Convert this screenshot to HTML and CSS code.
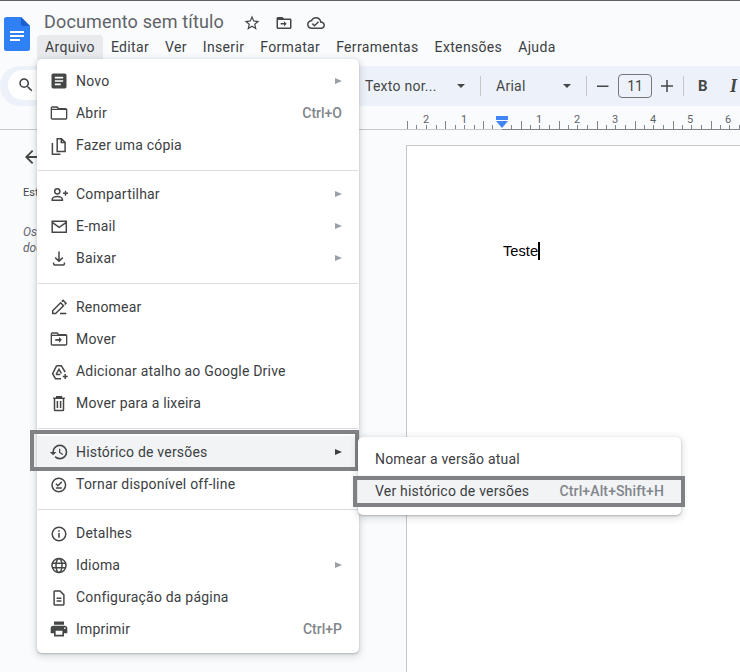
FILE: index.html
```html
<!DOCTYPE html>
<html lang="pt-BR">
<head>
<meta charset="utf-8">
<title>Documento sem título</title>
<link rel="stylesheet" href="styles.css">
</head>
<body>
<div class="app">
  <header class="header">
    <svg class="logo" width="26" height="34" viewBox="0 0 26 34"><path fill="#2f80f5" d="M2.5 0H17l9 9v22.5a2.5 2.5 0 0 1-2.5 2.5h-21A2.5 2.5 0 0 1 0 31.500v-29A2.500 2.500 0 0 1 2.500 0z"/><path fill="#1a5fd0" d="M17 0l9 9h-7a2 2 0 0 1-2-2z"/><path fill="#fff" d="M6 14h14v2H6zM6 18h14v2H6zM6 22h10v2H6z"/></svg>
    <div class="head-main">
      <div class="title-row">
        <span class="title">Documento sem título</span>
        <svg class="head-ico star" width="18" height="18" viewBox="0 0 24 24"><path d="M22 9.240l-7.190-.62L12 2 9.190 8.630 2 9.240l5.460 4.730L5.820 21 12 17.270 18.180 21l-1.630-7.030L22 9.240zM12 15.400l-3.760 2.270 1-4.280-3.320-2.880 4.380-.38L12 6.100l1.710 4.040 4.380.38-3.320 2.880 1 4.280L12 15.400z"/></svg>
        <svg class="head-ico" width="18" height="18" viewBox="0 0 24 24"><path d="M20 6h-8l-2-2H4c-1.100 0-1.990.9-1.990 2L2 18c0 1.100.9 2 2 2h16c1.100 0 2-.9 2-2V8c0-1.100-.9-2-2-2zm0 12H4V8h16v10zM12 16.500l3.500-3.500L12 9.500V12H7.500v2H12z"/></svg>
        <svg class="head-ico" width="18" height="18" viewBox="0 0 24 24"><path d="M19.350 10.040C18.670 6.590 15.640 4 12 4 9.110 4 6.600 5.640 5.350 8.040 2.340 8.360 0 10.910 0 14c0 3.310 2.690 6 6 6h13c2.760 0 5-2.240 5-5 0-2.640-2.050-4.780-4.650-4.960zM19 18H6c-2.210 0-4-1.790-4-4 0-2.050 1.530-3.760 3.560-3.970l1.070-.11.5-.95C8.080 7.140 9.940 6 12 6c2.620 0 4.880 1.860 5.390 4.430l.3 1.500 1.530.11c1.560.1 2.780 1.410 2.780 2.960 0 1.650-1.350 3-3 3zm-9-3.820l-2.090-2.090L6.500 13.500 10 17l6.010-6.010-1.410-1.410z"/></svg>
      </div>
      <nav class="menubar">
        <span class="mb-item mb-open">Arquivo</span>
        <span class="mb-item">Editar</span>
        <span class="mb-item">Ver</span>
        <span class="mb-item">Inserir</span>
        <span class="mb-item">Formatar</span>
        <span class="mb-item">Ferramentas</span>
        <span class="mb-item">Extensões</span>
        <span class="mb-item">Ajuda</span>
      </nav>
    </div>
  </header>

  <div class="toolbar">
    <div class="search">
      <svg width="18" height="18" viewBox="0 0 24 24" fill="#3c4043"><path d="M15.500 14h-.79l-.28-.27A6.470 6.470 0 0 0 16 9.500 6.500 6.500 0 1 0 9.500 16c1.610 0 3.090-.59 4.230-1.570l.27.28v.79l5 4.990L20.490 19l-4.990-5zm-6 0C7.010 14 5 11.990 5 9.500S7.010 5 9.500 5 14 7.010 14 9.500 11.990 14 9.500 14z"/></svg>
    </div>
    <div class="select sel-style"><span>Texto nor...</span><i class="caret"></i></div>
    <i class="sep"></i>
    <div class="select sel-font"><span>Arial</span><i class="caret"></i></div>
    <i class="sep sep-n"></i>
    <svg class="tb-sym tb-minus" width="12" height="12" viewBox="0 0 12 12"><path d="M0 5.500h11.500v1.500H0z"/></svg>
    <span class="size">11</span>
    <svg class="tb-sym tb-plus" width="12" height="12" viewBox="0 0 12 12"><path d="M5.250 0h1.500v5.250H12v1.500H6.750V12h-1.500V6.750H0v-1.500h5.250z"/></svg>
    <i class="sep sep-b"></i>
    <b class="tb-b">B</b>
    <i class="tb-i">I</i>
  </div>

  <div class="ruler">
    <svg width="740" height="24" viewBox="0 106 740 24">
      <path class="r-ticks" d="M407.500 121v8M416.500 125v4M426.500 125v4M436.500 125v4M445.500 121v8M455.500 125v4M464.500 125v4M474.500 125v4M483.500 121v8M492.500 125v4M511.500 125v4M521.500 121v8M530.500 125v4M539.500 125v4M549.500 125v4M559.500 121v8M568.500 125v4M577.500 125v4M587.500 125v4M597.500 121v8M606.500 125v4M615.500 125v4M625.500 125v4M635.500 121v8M644.500 125v4M653.500 125v4M663.500 125v4M673.500 121v8M682.500 125v4M691.500 125v4M701.500 125v4M711.500 121v8M720.500 125v4M729.500 125v4M739.500 125v4"/>
      <path class="r-line-l" d="M0 129.500h502"/>
      <path class="r-line-r" d="M502 129.500h238"/>
      <g class="r-nums">
        <text x="426" y="123">2</text><text x="464" y="123">1</text><text x="539" y="123">1</text><text x="577" y="123">2</text><text x="615" y="123">3</text><text x="653" y="123">4</text><text x="690" y="123">5</text><text x="728" y="123">6</text>
      </g>
      <path class="r-mark" d="M496 116h12v4h-12zM496 121h12l-6 7z"/>
    </svg>
  </div>

  <main class="workspace">
    <aside class="outline">
      <svg class="back" width="18" height="18" viewBox="0 0 18 18"><path d="M16 8H5.600l4.700-4.700L9 2 2 9l7 7 1.300-1.300L5.600 10H16z"/></svg>
      <p class="out-head">Estrutura do documento</p>
      <p class="out-note">Os títulos que você adicionar ao documento aparecerão aqui.</p>
    </aside>
    <section class="page"><p class="doc-text">Teste<span class="cursor"></span></p></section>
  </main>

  <div class="menu file-menu">
    <div class="row"><svg class="ico" viewBox="0 0 24 24"><path class="f" d="M19 3H5c-1.100 0-2 .9-2 2v14c0 1.100.9 2 2 2h14c1.100 0 2-.9 2-2V5c0-1.100-.9-2-2-2zm-5 14H7v-2h7v2zm3-4H7v-2h10v2zm0-4H7V7h10v2z"/></svg><span class="lbl">Novo</span><i class="arrow"></i></div>
    <div class="row"><svg class="ico" viewBox="0 0 24 24"><path class="f" d="M20 6h-8l-2-2H4c-1.100 0-1.990.9-1.990 2L2 18c0 1.100.9 2 2 2h16c1.100 0 2-.9 2-2V8c0-1.100-.9-2-2-2zm.4 12.400H3.600V8.400h16.800zM3.600 5.600h5.800l1 1.200H3.600z"/></svg><span class="lbl">Abrir</span><span class="key">Ctrl+O</span></div>
    <div class="row"><svg class="ico" viewBox="0 0 20 20"><path class="s" d="M8.200 3.700h4.300l3.600 3.600v9.100H8.200zM12.300 3.700v3.800h3.800M3.400 8v11.200h8"/></svg><span class="lbl">Fazer uma cópia</span></div>
    <hr class="div">
    <div class="row"><svg class="ico" viewBox="0 0 20 20"><circle class="s" cx="8.300" cy="7.300" r="2.600"/><path class="s" d="M3.200 16.300v-1c0-1.900 3.100-2.800 5.100-2.800s5.100.9 5.100 2.800v1zM16.500 6.800v5M14 9.300h5"/></svg><span class="lbl">Compartilhar</span><i class="arrow"></i></div>
    <div class="row"><svg class="ico" viewBox="0 0 20 20"><path class="s" d="M3.200 5.200h14.100v11.100H3.200zM3.200 6.400l7 5 7.100-5"/></svg><span class="lbl">E-mail</span><i class="arrow"></i></div>
    <div class="row"><svg class="ico" viewBox="0 0 20 20"><path class="s" d="M10 3.500v9.300M6.200 9.600l3.800 3.700 3.800-3.700M4.600 14.400v1.400c0 .8.500 1.200 1.200 1.200h8.400c.7 0 1.200-.4 1.200-1.200v-1.400"/></svg><span class="lbl">Baixar</span><i class="arrow"></i></div>
    <hr class="div">
    <div class="row"><svg class="ico" viewBox="0 0 20 20"><path class="s" d="M3.700 16.600v-2.900l7.900-7.900 2.900 2.900-7.900 7.900zM12.800 4.600l1.300-1.300 2.900 2.900-1.300 1.300"/><path class="f" d="M11 15.700h6.300v1.600H11z"/></svg><span class="lbl">Renomear</span></div>
    <div class="row"><svg class="ico" viewBox="0 0 24 24"><path class="f" d="M20 6h-8l-2-2H4c-1.100 0-1.990.9-1.990 2L2 18c0 1.100.9 2 2 2h16c1.100 0 2-.9 2-2V8c0-1.100-.9-2-2-2zm.4 12.400H3.600V8.400h16.800zM3.600 5.600h5.800l1 1.200H3.600zM12 16.500l3.500-3.500L12 9.500V12H7.500v2H12z"/></svg><span class="lbl">Mover</span></div>
    <div class="row"><svg class="ico" viewBox="0 0 20 20"><path class="s" d="M7.700 4.700h4.600l3.800 6.300M12 17.700H6.500l-2.900-5 4.100-8M7 13.500l3-5.200 2.400 4.200M7 13.500h4.300"/><path class="s" d="M16.200 13v5M13.700 15.500h5"/></svg><span class="lbl">Adicionar atalho ao Google Drive</span></div>
    <div class="row"><svg class="ico" viewBox="0 0 20 20"><path class="s" d="M4.200 5.200h11.600M5.500 5.200v11.600c0 .5.300.8.800.8h7.400c.5 0 .8-.3.8-.8V5.200M7.700 5v-1.300h4.600V5M8.400 8v7M11.600 8v7"/></svg><span class="lbl">Mover para a lixeira</span></div>
    <hr class="div">
    <div class="row row-on frame-hist"><svg class="ico" viewBox="0 0 24 24"><path class="f" d="M13 3a9 9 0 0 0-9 9H1l3.890 3.890.07.14L9 12H6c0-3.870 3.130-7 7-7s7 3.130 7 7-3.130 7-7 7c-1.930 0-3.680-.79-4.940-2.060l-1.420 1.420A8.954 8.954 0 0 0 13 21a9 9 0 0 0 0-18zm-1 5v5l4.280 2.540.72-1.210-3.500-2.080V8H12z"/></svg><span class="lbl">Histórico de versões</span><i class="arrow arrow-on"></i></div>
    <div class="row"><svg class="ico" viewBox="0 0 20 20"><circle class="s" cx="9.800" cy="11" r="6.800"/><path class="s" d="M6.900 9.800l2 2 3.900-3.900M6.900 14h5.900"/></svg><span class="lbl">Tornar disponível off-line</span></div>
    <hr class="div">
    <div class="row"><svg class="ico" viewBox="0 0 20 20"><circle class="s" cx="10" cy="11" r="6.800"/><path class="f" d="M9.200 10h1.600v4.700H9.200zM9.200 7.200h1.600v1.600H9.200z"/></svg><span class="lbl">Detalhes</span></div>
    <div class="row"><svg class="ico" viewBox="0 0 20 20"><circle class="s" cx="10" cy="10.500" r="7"/><ellipse class="s" cx="10" cy="10.500" rx="3" ry="7"/><path class="s" d="M3.300 8.200h13.400M3.300 12.800h13.400"/></svg><span class="lbl">Idioma</span><i class="arrow"></i></div>
    <div class="row"><svg class="ico" viewBox="0 0 20 20"><path class="s" d="M5.100 4.700c0-.4.300-.7.700-.7h5.200l3.900 3.900v9.300c0 .4-.3.700-.7.700H5.800c-.4 0-.7-.3-.7-.7zM7.600 11.300h4.800M7.600 14h4.800"/></svg><span class="lbl">Configuração da página</span></div>
    <div class="row"><svg class="ico" viewBox="0 0 24 24"><path class="f" d="M19 8H5c-1.660 0-3 1.340-3 3v6h4v4h12v-4h4v-6c0-1.660-1.340-3-3-3zm-3 11H8v-5h8v5zm3-7c-.55 0-1-.45-1-1s.45-1 1-1 1 .45 1 1-.45 1-1 1zm-1-9H6v4h12V3z"/></svg><span class="lbl">Imprimir</span><span class="key">Ctrl+P</span></div>
  </div>

  <div class="menu sub-menu">
    <div class="row sub-row"><span class="lbl">Nomear a versão atual</span></div>
    <div class="row sub-row row-on frame-view"><span class="lbl">Ver histórico de versões</span><span class="key key-long">Ctrl+Alt+Shift+H</span></div>
  </div>
</div>
</body>
</html>
```
FILE: styles.css
```css
* { box-sizing: border-box; }
html, body { margin: 0; padding: 0; }
body { font-family: Roboto, "Liberation Sans", sans-serif; color: #3c4043; }

.app {
  position: relative;
  width: 740px;
  height: 672px;
  overflow: hidden;
  background: #f9fbfd;
  display: flex;
  flex-direction: column;
  border-top: 1px solid #5f6368;
}

.header { display: flex; height: 65px; padding: 16px 0 0 4px; flex: none; }
.logo { flex: none; }
.head-main { margin-left: 7px; margin-top: -6px; }
.title-row { display: flex; align-items: center; height: 24px; padding-left: 7px; }
.title { font-size: 18px; color: #5f6368; width: 192px; letter-spacing: .15px; margin-bottom: 3px; }
.head-ico { fill: #444746; margin-right: 14px; flex: none; }
.star { margin-left: 7px; }

.menubar { display: flex; height: 25px; }
.mb-item { padding: 0 8px; font-size: 14px; line-height: 25px; letter-spacing: .34px; }
.mb-open { background: #e8eaed; border-radius: 4px 4px 0 0; }

.toolbar {
  flex: none;
  height: 40px;
  background: #edf2fa;
  border-radius: 20px 0 0 20px;
  display: flex;
  align-items: center;
  padding-left: 8px;
  color: #444746;
  font-size: 14px;
}
.toolbar > * { flex: none; }
.search {
  width: 340px;
  height: 30px;
  margin: -2px 17px 0 0;
  background: #fff;
  border-radius: 15px;
  padding: 6px 0 0 9px;
}
.search svg { display: block; }
.select { display: flex; align-items: center; justify-content: space-between; letter-spacing: .25px; }
.sel-style { width: 100px; }
.sel-font { width: 75px; }
.caret { width: 0; height: 0; border: 4px solid transparent; border-top: 4px solid #444746; border-bottom: 0; }
.sep { width: 1px; height: 20px; background: #c7c7c7; margin: 0 15px; }
.sep-n { margin-right: 10px; }
.sep-b { margin: 0 14px 0 10px; }
.tb-sym { fill: #444746; }
.tb-minus { margin-right: 9px; }
.tb-plus { margin-left: 9px; }
.size {
  width: 34px;
  height: 24px;
  border: 1px solid #747775;
  border-radius: 4px;
  text-align: center;
  line-height: 22px;
}
.tb-b { width: 14px; font-size: 15px; font-weight: 700; margin-right: 18px; }
.tb-i { font-family: "Liberation Serif", serif; font-size: 18px; font-weight: 700; font-style: italic; }

.ruler { flex: none; height: 24px; }
.ruler svg { display: block; }
.r-ticks { stroke: #80868b; stroke-width: 1; fill: none; }
.r-line-l { stroke: #c7c7c7; stroke-width: 1; }
.r-line-r { stroke: #80868b; stroke-width: 1; }
.r-nums text { font-size: 11px; fill: #5f6368; text-anchor: middle; font-family: Roboto, sans-serif; }
.r-mark { fill: #4285f4; }

.workspace { flex: 1; display: flex; min-height: 0; }
.outline { width: 406px; flex: none; padding: 18px 0 0 23px; }
.back { display: block; fill: #444746; }
.out-head { margin: 20px 0 0; font-size: 11px; line-height: 14px; color: #444746; }
.out-note { margin: 24px 0 0; width: 200px; font-size: 12px; line-height: 16px; font-style: italic; color: #5f6368; }

.page {
  flex: 1;
  margin-top: 15px;
  background: #fff;
  border-left: 1px solid #c7c7c7;
  border-top: 1px solid #c7c7c7;
  padding: 96px 0 0 96px;
}
.doc-text { margin: 0; font-family: "Liberation Sans", Arial, sans-serif; font-size: 14.67px; line-height: 18px; color: #000; display: flex; align-items: center; }
.cursor { display: inline-block; width: 2px; height: 18px; background: #000; }

.menu {
  position: absolute;
  background: #fff;
  border-radius: 5px;
  box-shadow: 0 2px 6px 2px rgba(60,64,67,.15), 0 1px 2px rgba(60,64,67,.3);
  padding: 6px 0 8px;
}
.file-menu { left: 37px; top: 58px; width: 322px; }
.sub-menu { left: 358px; top: 436px; width: 323px; }

.row {
  position: relative;
  display: flex;
  align-items: center;
  height: 32px;
  padding: 0 17px 0 12px;
  font-size: 14px;
  letter-spacing: .2px;
}
.row-on { background: #f1f3f4; }
.sub-row { padding-left: 17px; }
.ico { width: 20px; height: 20px; margin-right: 7px; flex: none; }
.f { fill: #444746; }
.s { fill: none; stroke: #444746; stroke-width: 1.500; }
.lbl { flex: 1; white-space: nowrap; }
.key { color: #80868b; font-weight: 500; letter-spacing: 0; }
.key-long { letter-spacing: .12px; }
.arrow { width: 0; height: 0; border-left: 7px solid #9aa0a6; border-top: 3.500px solid transparent; border-bottom: 3.500px solid transparent; }
.arrow-on { border-left-color: #3c4043; }
.div { border: 0; height: 1px; background: #dadce0; margin: 9px 1px 7px; }

.frame-hist::after, .frame-view::after {
  content: "";
  position: absolute;
  border: 4px solid #808184;
  pointer-events: none;
}
.frame-hist::after { left: -7px; right: 0; top: -6px; bottom: -3px; }
.frame-view::after { left: -5px; right: -4px; top: 1px; bottom: 0; }
```
